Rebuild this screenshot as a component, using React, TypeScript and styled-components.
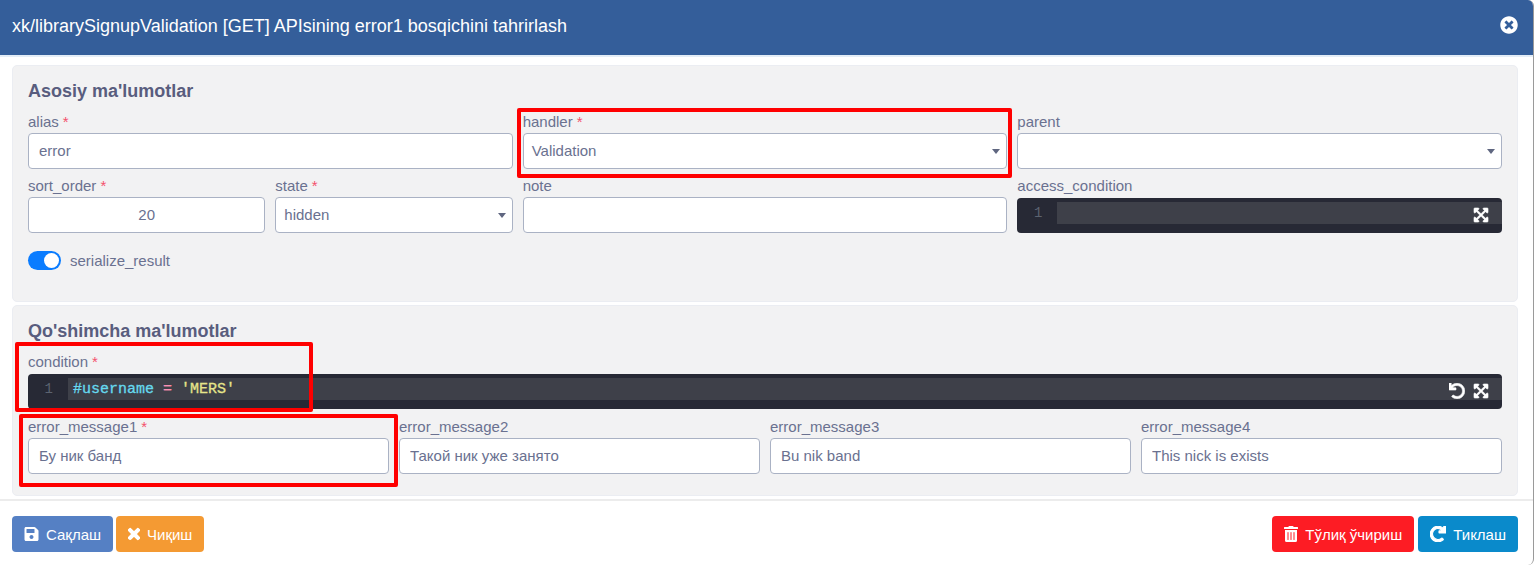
import styled, { createGlobalStyle } from "styled-components";
import { ReactNode } from "react";
import {
  FaExpandArrowsAlt,
  FaRedo,
  FaSave,
  FaTimes,
  FaTimesCircle,
  FaTrashAlt,
  FaUndo,
} from "react-icons/fa";

const GlobalStyle = createGlobalStyle`
  html, body {
    margin: 0;
    padding: 0;
    background: #fff;
  }
  body {
    font-family: "Liberation Sans", Arial, sans-serif;
    font-size: 15px;
    color: #646c9a;
  }
  * {
    box-sizing: border-box;
  }
`;

const Modal = styled.div`
  width: 1534px;
  height: 565px;
  background: #fff;
  border-right: 1px solid #9a9a9a;
  border-radius: 0 6px 6px 0;
  overflow: hidden;
  display: flex;
  flex-direction: column;
`;

const Header = styled.header`
  height: 57px;
  flex-shrink: 0;
  background: #345e9a;
  border-bottom: 2px solid #e3edf7;
  padding: 0 12px;
  display: flex;
  align-items: center;
  justify-content: space-between;
  color: #fff;
`;

const Title = styled.h1`
  margin: 0 0 3px;
  font-size: 18px;
  font-weight: 400;
`;

const CloseIcon = styled(FaTimesCircle)`
  width: 18px;
  height: 18px;
  margin: 0 3px 5px 0;
`;

const Body = styled.main`
  padding: 8px 15px 0 12px;
  display: flex;
  flex-direction: column;
  gap: 3px;
`;

const Panel = styled.section<{ $height: number }>`
  height: ${({ $height }) => $height}px;
  background: #f2f2f3;
  border: 1px solid #ebedf2;
  border-radius: 5px;
  padding: 15px 15px 0;
`;

const PanelTitle = styled.h2`
  margin: 0 0 13px;
  height: 21px;
  font-size: 18px;
  line-height: 21px;
  font-weight: 700;
  color: #595d7e;
`;

const Grid = styled.div<{ $cols: number }>`
  display: grid;
  grid-template-columns: repeat(${({ $cols }) => $cols}, 1fr);
  column-gap: 10px;
`;

const Rows = styled.div<{ $gap: number }>`
  display: flex;
  flex-direction: column;
  gap: ${({ $gap }) => $gap}px;
`;

const Field = styled.div`
  position: relative;
  display: flex;
  flex-direction: column;
  min-width: 0;
`;

const Label = styled.label`
  height: 18px;
  line-height: 13px;
  font-size: 15px;
  color: #6a7190;
  white-space: nowrap;
`;

const Required = styled.span`
  color: #f4516c;
  margin-left: 4px;
`;

const Input = styled.input<{ $center?: boolean }>`
  width: 100%;
  height: 36px;
  padding: 0 10px 2px;
  background: #fff;
  border: 1px solid #aab2c4;
  border-radius: 4px;
  font-family: inherit;
  font-size: 15px;
  color: #6a7190;
  text-align: ${({ $center }) => ($center ? "center" : "left")};
  outline: none;
`;

const SelectBox = styled.div`
  height: 36px;
  padding: 0 8px 2px;
  background: #fff;
  border: 1px solid #aab2c4;
  border-radius: 4px;
  display: flex;
  align-items: center;
  justify-content: space-between;
  color: #6a7190;
`;

const Caret = styled.span`
  width: 0;
  height: 0;
  margin: 2px -2px 0 0;
  border-left: 4px solid transparent;
  border-right: 4px solid transparent;
  border-top: 5px solid #5f6680;
`;

const Editor = styled.div`
  height: 35px;
  margin-top: 1px;
  background: #272935;
  border-radius: 4px;
  padding-top: 4px;
  display: flex;
  align-items: flex-start;
`;

const Gutter = styled.span`
  width: 40px;
  height: 22px;
  flex-shrink: 0;
  padding-right: 15px;
  text-align: right;
  font-family: "Liberation Mono", monospace;
  font-size: 14px;
  line-height: 22px;
  color: #5c6370;
`;

const ActiveLine = styled.div`
  flex: 1;
  height: 22px;
  background: #3e4049;
  padding-left: 5px;
  display: flex;
  align-items: center;
  justify-content: space-between;
  font-family: "Liberation Mono", monospace;
  font-size: 15px;
  white-space: pre;
`;

const Token = styled.span<{ $color: string }>`
  color: ${({ $color }) => $color};
  -webkit-text-stroke: 0.3px ${({ $color }) => $color};
`;

const EditorTools = styled.span`
  display: flex;
  align-items: center;
  gap: 8px;
  margin: 4px 13px 0 auto;
  color: #fff;
  font-size: 16px;

  svg {
    stroke: currentColor;
    stroke-width: 20;
  }
`;

const Switch = styled.span`
  width: 33px;
  height: 19px;
  border-radius: 10px;
  background: #0a7cff;
  padding: 2px;
  display: flex;
  justify-content: flex-end;
`;

const Knob = styled.span`
  width: 15px;
  height: 15px;
  border-radius: 50%;
  background: #fff;
`;

const SwitchRow = styled.div`
  margin-top: 18px;
  display: flex;
  align-items: center;
  gap: 9px;
  color: #6a7190;
`;

const Highlight = styled.span<{
  $top: number;
  $left: number;
  $right: number;
  $bottom: number;
}>`
  position: absolute;
  top: ${({ $top }) => $top}px;
  left: ${({ $left }) => $left}px;
  right: ${({ $right }) => $right}px;
  bottom: ${({ $bottom }) => $bottom}px;
  border: 4px solid #f00;
  border-radius: 2px;
  pointer-events: none;
`;

const Footer = styled.footer`
  margin-top: 3px;
  border-top: 2px solid #ececec;
  padding: 15px 15px 0 12px;
  display: flex;
  justify-content: space-between;
`;

const ButtonGroup = styled.div<{ $gap: number }>`
  display: flex;
  gap: ${({ $gap }) => $gap}px;
`;

const Button = styled.button<{ $color: string }>`
  height: 36px;
  padding: 0 12px;
  background: ${({ $color }) => $color};
  border: none;
  border-radius: 4px;
  color: #fff;
  font-family: inherit;
  font-size: 15px;
  display: flex;
  align-items: center;
  gap: 7px;
`;

const ButtonIcon = styled.span<{ $width: number; $bold?: boolean }>`
  width: ${({ $width }) => $width}px;
  height: 16px;
  display: flex;

  svg {
    width: 100%;
    height: 100%;
    stroke: currentColor;
    stroke-width: ${({ $bold }) => ($bold ? 36 : 0)};
  }
`;

function FormField({
  label,
  required,
  children,
}: {
  label: string;
  required?: boolean;
  children: ReactNode;
}) {
  return (
    <Field>
      <Label>
        {label}
        {required && <Required>*</Required>}
      </Label>
      {children}
    </Field>
  );
}

function Select({ value }: { value?: string }) {
  return (
    <SelectBox>
      <span>{value}</span>
      <Caret />
    </SelectBox>
  );
}

function App() {
  return (
    <Modal>
      <GlobalStyle />
      <Header>
        <Title>xk/librarySignupValidation [GET] APIsining error1 bosqichini tahrirlash</Title>
        <CloseIcon />
      </Header>
      <Body>
        <Panel $height={237}>
          <PanelTitle>Asosiy ma'lumotlar</PanelTitle>
          <Rows $gap={10}>
            <Grid $cols={3}>
              <FormField label="alias" required>
                <Input defaultValue="error" />
              </FormField>
              <FormField label="handler" required>
                <Select value="Validation" />
                <Highlight $top={-7} $left={-6} $right={-5} $bottom={-9} />
              </FormField>
              <FormField label="parent">
                <Select />
              </FormField>
            </Grid>
            <Grid $cols={3}>
              <Grid $cols={2}>
                <FormField label="sort_order" required>
                  <Input $center defaultValue="20" />
                </FormField>
                <FormField label="state" required>
                  <Select value="hidden" />
                </FormField>
              </Grid>
              <FormField label="note">
                <Input />
              </FormField>
              <FormField label="access_condition">
                <Editor>
                  <Gutter>1</Gutter>
                  <ActiveLine>
                    <EditorTools>
                      <FaExpandArrowsAlt />
                    </EditorTools>
                  </ActiveLine>
                </Editor>
              </FormField>
            </Grid>
          </Rows>
          <SwitchRow>
            <Switch>
              <Knob />
            </Switch>
            serialize_result
          </SwitchRow>
        </Panel>
        <Panel $height={191}>
          <PanelTitle>Qo'shimcha ma'lumotlar</PanelTitle>
          <Rows $gap={11}>
            <FormField label="condition" required>
              <Editor>
                <Gutter>1</Gutter>
                <ActiveLine>
                  <span>
                    <Token $color="#66d9ef">#username</Token>
                    <Token $color="#f78fb3"> = </Token>
                    <Token $color="#e6e58a">'MERS'</Token>
                  </span>
                  <EditorTools>
                    <FaUndo />
                    <FaExpandArrowsAlt />
                  </EditorTools>
                </ActiveLine>
              </Editor>
              <Highlight $top={-13} $left={-13} $right={1189} $bottom={-3} />
            </FormField>
            <Grid $cols={4}>
              <FormField label="error_message1" required>
                <Input defaultValue="Бу ник банд" />
                <Highlight $top={-6} $left={-9} $right={-9} $bottom={-13} />
              </FormField>
              <FormField label="error_message2">
                <Input defaultValue="Такой ник уже занято" />
              </FormField>
              <FormField label="error_message3">
                <Input defaultValue="Bu nik band" />
              </FormField>
              <FormField label="error_message4">
                <Input defaultValue="This nick is exists" />
              </FormField>
            </Grid>
          </Rows>
        </Panel>
      </Body>
      <Footer>
        <ButtonGroup $gap={3}>
          <Button $color="#5580c4">
            <ButtonIcon $width={15}>
              <FaSave />
            </ButtonIcon>
            Сақлаш
          </Button>
          <Button $color="#f49a33">
            <ButtonIcon $width={12} $bold>
              <FaTimes />
            </ButtonIcon>
            Чиқиш
          </Button>
        </ButtonGroup>
        <ButtonGroup $gap={4}>
          <Button $color="#fd1c24">
            <ButtonIcon $width={14}>
              <FaTrashAlt />
            </ButtonIcon>
            Тўлиқ ўчириш
          </Button>
          <Button $color="#0a8acb">
            <ButtonIcon $width={16} $bold>
              <FaRedo />
            </ButtonIcon>
            Тиклаш
          </Button>
        </ButtonGroup>
      </Footer>
    </Modal>
  );
}

export default App;
